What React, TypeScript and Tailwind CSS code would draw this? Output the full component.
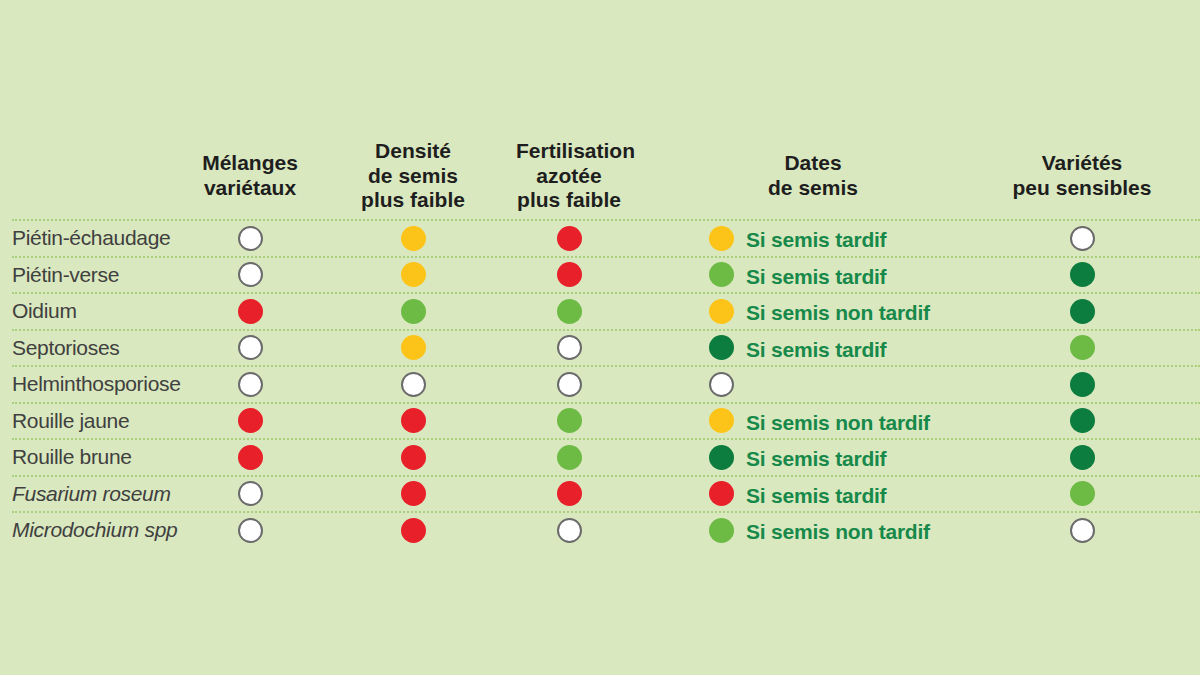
import React from "react";

type Dot = "none" | "red" | "yellow" | "light" | "dark";

type Row = {
  label: string;
  italic?: boolean;
  cells: [Dot, Dot, Dot, Dot, Dot];
  note?: string;
};

const rows: Row[] = [
  { label: "Piétin-échaudage", cells: ["none", "yellow", "red", "yellow", "none"], note: "Si semis tardif" },
  { label: "Piétin-verse", cells: ["none", "yellow", "red", "light", "dark"], note: "Si semis tardif" },
  { label: "Oidium", cells: ["red", "light", "light", "yellow", "dark"], note: "Si semis non tardif" },
  { label: "Septorioses", cells: ["none", "yellow", "none", "dark", "light"], note: "Si semis tardif" },
  { label: "Helminthosporiose", cells: ["none", "none", "none", "none", "dark"] },
  { label: "Rouille jaune", cells: ["red", "red", "light", "yellow", "dark"], note: "Si semis non tardif" },
  { label: "Rouille brune", cells: ["red", "red", "light", "dark", "dark"], note: "Si semis tardif" },
  { label: "Fusarium roseum", italic: true, cells: ["none", "red", "red", "red", "light"], note: "Si semis tardif" },
  { label: "Microdochium spp", italic: true, cells: ["none", "red", "none", "light", "none"], note: "Si semis non tardif" },
];

const headers = [
  ["Mélanges", "variétaux"],
  ["Densité", "de semis", "plus faible"],
  ["Fertilisation", "azotée", "plus faible"],
  ["Dates", "de semis"],
  ["Variétés", "peu sensibles"],
];

const Circle: React.FC<{ kind: Dot }> = ({ kind }) => {
  if (kind === "none") {
    return <div className="h-[25px] w-[25px] rounded-full border-[2.5px] border-[#6b6b6b] bg-white" />;
  }
  const color =
    kind === "red"
      ? "bg-[#e8202a]"
      : kind === "yellow"
      ? "bg-[#fcc419]"
      : kind === "light"
      ? "bg-[#6dbb45]"
      : "bg-[#0c7c3f]";
  return <div className={`h-[25px] w-[25px] rounded-full ${color}`} />;
};

const cols = "grid grid-cols-[178px_120px_206px_106px_382px_156px]";

export default function App() {
  return (
    <div
      className="h-[675px] w-[1200px] overflow-hidden bg-[#dae8bf] pl-[12px]"
      style={{ fontFamily: '"Liberation Sans", Arial, sans-serif' }}
    >
      {/* header */}
      <div className={`${cols} mt-[139px] h-[80px] pb-[8px] items-center`}>
        <div />
        {headers.map((lines, i) => (
          <div key={i} className="text-center text-[21px] font-bold leading-[24.5px] text-[#1e1e1e]">
            {lines.map((l) => (
              <div key={l}>{l}</div>
            ))}
          </div>
        ))}
      </div>

      {/* rows */}
      {rows.map((r) => (
        <div
          key={r.label}
          className={`${cols} h-[36.5px] items-center border-t-2 border-dotted border-[#a8cf7c]`}
        >
          <div
            className={`-mt-[1px] text-[21px] leading-none tracking-[-0.015em] text-[#404040] ${r.italic ? "italic" : ""}`}
          >
            {r.label}
          </div>
          {r.cells.map((c, i) =>
            i === 3 ? (
              <div key={i} className="flex items-center gap-[12px] pl-[87px]">
                <Circle kind={c} />
                {r.note && (
                  <span className="mt-[3px] text-[21px] font-bold leading-none tracking-[-0.01em] text-[#17894a]">
                    {r.note}
                  </span>
                )}
              </div>
            ) : (
              <div key={i} className="flex justify-center">
                <Circle kind={c} />
              </div>
            )
          )}
        </div>
      ))}
    </div>
  );
}
